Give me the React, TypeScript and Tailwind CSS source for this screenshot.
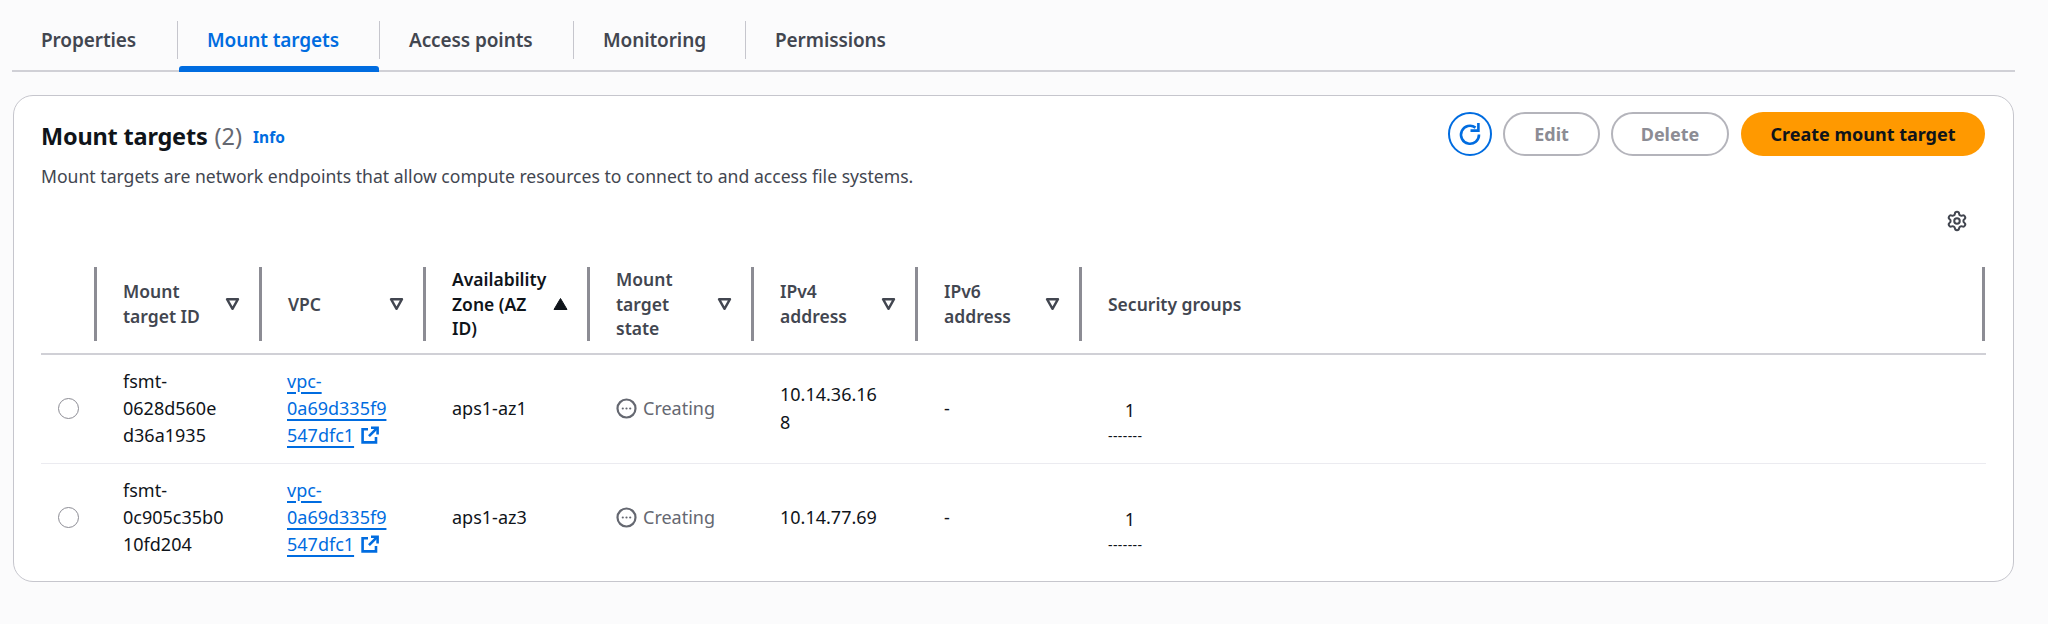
import { Settings } from "lucide-react";

const font = { fontFamily: '"Noto Sans", sans-serif' };

function SortIcon({ active }: { active?: boolean }) {
  return (
    <svg width="15" height="14" viewBox="0 0 15 14" className="shrink-0">
      {active ? (
        <path d="M7.5 1.5L14 12.5H1Z" fill="#0f141a" stroke="#0f141a" strokeWidth="1" strokeLinejoin="round" />
      ) : (
        <path d="M2 2.2H13L7.5 11.8Z" fill="none" stroke="#424650" strokeWidth="2.4" strokeLinejoin="round" />
      )}
    </svg>
  );
}

function ExternalIcon() {
  return (
    <svg width="18" height="18" viewBox="0 0 18 18" className="inline-block ml-[7px] align-[-2px]" fill="none" stroke="#006ce0" strokeWidth="2.6">
      <path d="M7 3.2H1.6V16.4H15V11" />
      <path d="M8 10.2L16 2.2" />
      <path d="M10 1.8H16.6V8.4" />
    </svg>
  );
}

function CreatingIcon() {
  return (
    <svg width="21" height="21" viewBox="0 0 21 21" className="shrink-0" fill="none">
      <circle cx="10.5" cy="10.5" r="9" stroke="#656871" strokeWidth="2.2" />
      <circle cx="6.8" cy="10.5" r="1.1" fill="#656871" />
      <circle cx="10.5" cy="10.5" r="1.1" fill="#656871" />
      <circle cx="14.2" cy="10.5" r="1.1" fill="#656871" />
    </svg>
  );
}

const tabs = [
  { label: "Properties", width: "w-[165px]", pl: "pl-[29px]" },
  { label: "Mount targets", width: "w-[202px]", pl: "pl-[29px]", active: true, sep: true },
  { label: "Access points", width: "w-[194px]", pl: "pl-[29px]", sep: true },
  { label: "Monitoring", width: "w-[172px]", pl: "pl-[29px]", sep: true },
  { label: "Permissions", width: "w-[180px]", pl: "pl-[29px]", sep: true },
];

const headers = [
  { label: "Mount target ID", w: "w-[100px]" },
  { label: "VPC", w: "w-[100px]" },
  { label: "Availability Zone (AZ ID)", w: "w-[104px]", active: true },
  { label: "Mount target state", w: "w-[100px]" },
  { label: "IPv4 address", w: "w-[100px]" },
  { label: "IPv6 address", w: "w-[100px]" },
];

const rows = [
  { id: ["fsmt-", "0628d560e", "d36a1935"], az: "aps1-az1", ip: ["10.14.36.16", "8"] },
  { id: ["fsmt-", "0c905c35b0", "10fd204"], az: "aps1-az3", ip: ["10.14.77.69"] },
];

const gridCols = "grid grid-cols-[53px_165px_164px_164px_164px_164px_164px_906px]";

export default function App() {
  return (
    <div style={font} className="h-[624px] w-[2048px] overflow-hidden bg-[#fbfbfc] pt-[21px] text-[#0f141a]">
      <div className="ml-[12px] w-[2003px] h-[51px] border-b-[2px] border-[#d0d0d6] flex items-start">
        {tabs.map((t) => (
          <div key={t.label} className={`relative h-[38px] flex items-center ${t.width} ${t.pl} ${t.sep ? "border-l-[1.5px] border-[#c6c6cd]" : ""}`}>
            <span className={`text-[19px] font-semibold leading-[38px] tracking-[-0.1px] ${t.active ? "text-[#006ce0]" : "text-[#424650]"}`}>{t.label}</span>
            {t.active && <div className="absolute left-[1px] right-0 top-[45px] h-[6px] rounded-t-[3px] bg-[#006ce0]" />}
          </div>
        ))}
      </div>

      <div className="ml-[13px] mt-[23px] w-[2001px] h-[487px] rounded-[20px] border-[1.5px] border-[#c6c6cd] bg-white px-[27px] pt-[16px]">
        <div className="flex justify-between h-[44px] pr-[1px]">
          <div className="pt-[2px]">
            <div className="flex items-center h-[44px]">
              <span className="text-[23.5px] font-bold leading-[44px] tracking-[-0.2px]">Mount targets</span>
              <span className="ml-[7px] text-[23.5px] leading-[44px] text-[#656871]">(2)</span>
              <span className="ml-[11px] mt-[4px] text-[15.5px] font-bold text-[#006ce0]">Info</span>
            </div>
            <p className="mt-[5px] text-[17.6px] leading-[26px] text-[#424650]">
              Mount targets are network endpoints that allow compute resources to connect to and access file systems.
            </p>
          </div>
          <div className="flex items-center">
            <button className="w-[44px] h-[44px] rounded-full border-[2.6px] border-[#006ce0] bg-white flex items-center justify-center">
              <svg width="24" height="24" viewBox="0 0 24 24" fill="none" stroke="#006ce0" strokeWidth="2.6">
                <path d="M17.5 5.6A9 9 0 1 0 21 12.5" />
                <path d="M12.5 8.6H20.4V1" />
              </svg>
            </button>
            <button className="ml-[11px] w-[97px] h-[44px] rounded-full border-[2.6px] border-[#b4b4bb] bg-white text-[18px] font-bold text-[#8c8c94]">Edit</button>
            <button className="ml-[11px] w-[118px] h-[44px] rounded-full border-[2.6px] border-[#b4b4bb] bg-white text-[18px] font-bold text-[#8c8c94]">Delete</button>
            <button className="ml-[12px] w-[244px] h-[44px] rounded-full bg-[#ff9900] text-[18px] font-bold text-[#0f141a]">Create mount target</button>
          </div>
        </div>

        <div className="flex justify-end h-[22px] mt-[54px] pr-[18px]">
          <Settings size={22} color="#424650" strokeWidth={2.2} />
        </div>

        <div className={`${gridCols} mt-[35px] h-[88px] border-b-[2px] border-[#d0d0d6] items-start`}>
          <div />
          {headers.map((h) => (
            <div key={h.label} className="h-[74px] border-l-[3px] border-[#8c8c94] pl-[26px] pr-[19px] flex items-center justify-between">
              <span className={`${h.w} text-[17.5px] font-semibold leading-[24.7px] ${h.active ? "text-[#0f141a]" : "text-[#424650]"}`}>{h.label}</span>
              <SortIcon active={h.active} />
            </div>
          ))}
          <div className="h-[74px] border-x-[3px] border-x-[#8c8c94] border-r-[3px] pl-[26px] flex items-center text-[17.5px] font-semibold text-[#424650]">Security groups</div>
        </div>

        {rows.map((r, i) => (
          <div key={r.az} className={`${gridCols} h-[108.5px] items-center text-[18px] leading-[27.3px] ${i === 0 ? "border-b-[1.5px] border-[#ebebf0]" : ""}`}>
            <div className="pl-[17px]">
              <div className="w-[21px] h-[21px] rounded-full border-[1.5px] border-[#8c8c94] bg-white" />
            </div>
            <div className="pl-[29px]">
              {r.id.map((l) => (
                <div key={l}>{l}</div>
              ))}
            </div>
            <div className="pl-[28px] text-[#006ce0]">
              <div><span className="underline underline-offset-[4px] decoration-[1.5px]">vpc-</span></div>
              <div><span className="underline underline-offset-[4px] decoration-[1.5px]">0a69d335f9</span></div>
              <div>
                <span className="underline underline-offset-[4px] decoration-[1.5px]">547dfc1</span>
                <ExternalIcon />
              </div>
            </div>
            <div className="pl-[29px]">{r.az}</div>
            <div className="pl-[29px] flex items-center gap-[6px] text-[#656871]">
              <CreatingIcon />
              <span>Creating</span>
            </div>
            <div className="pl-[29px]">
              {r.ip.map((l) => (
                <div key={l}>{l}</div>
              ))}
            </div>
            <div className="pl-[29px]">-</div>
            <div className="pl-[29px]">
              <div className="w-[44px] text-center leading-[27px] mt-[24px]">1</div>
              <div className="w-[44px] mt-[3px] text-[14px] leading-[18px] whitespace-nowrap overflow-hidden tracking-[0.4px]">-------</div>
            </div>
          </div>
        ))}
      </div>
    </div>
  );
}
